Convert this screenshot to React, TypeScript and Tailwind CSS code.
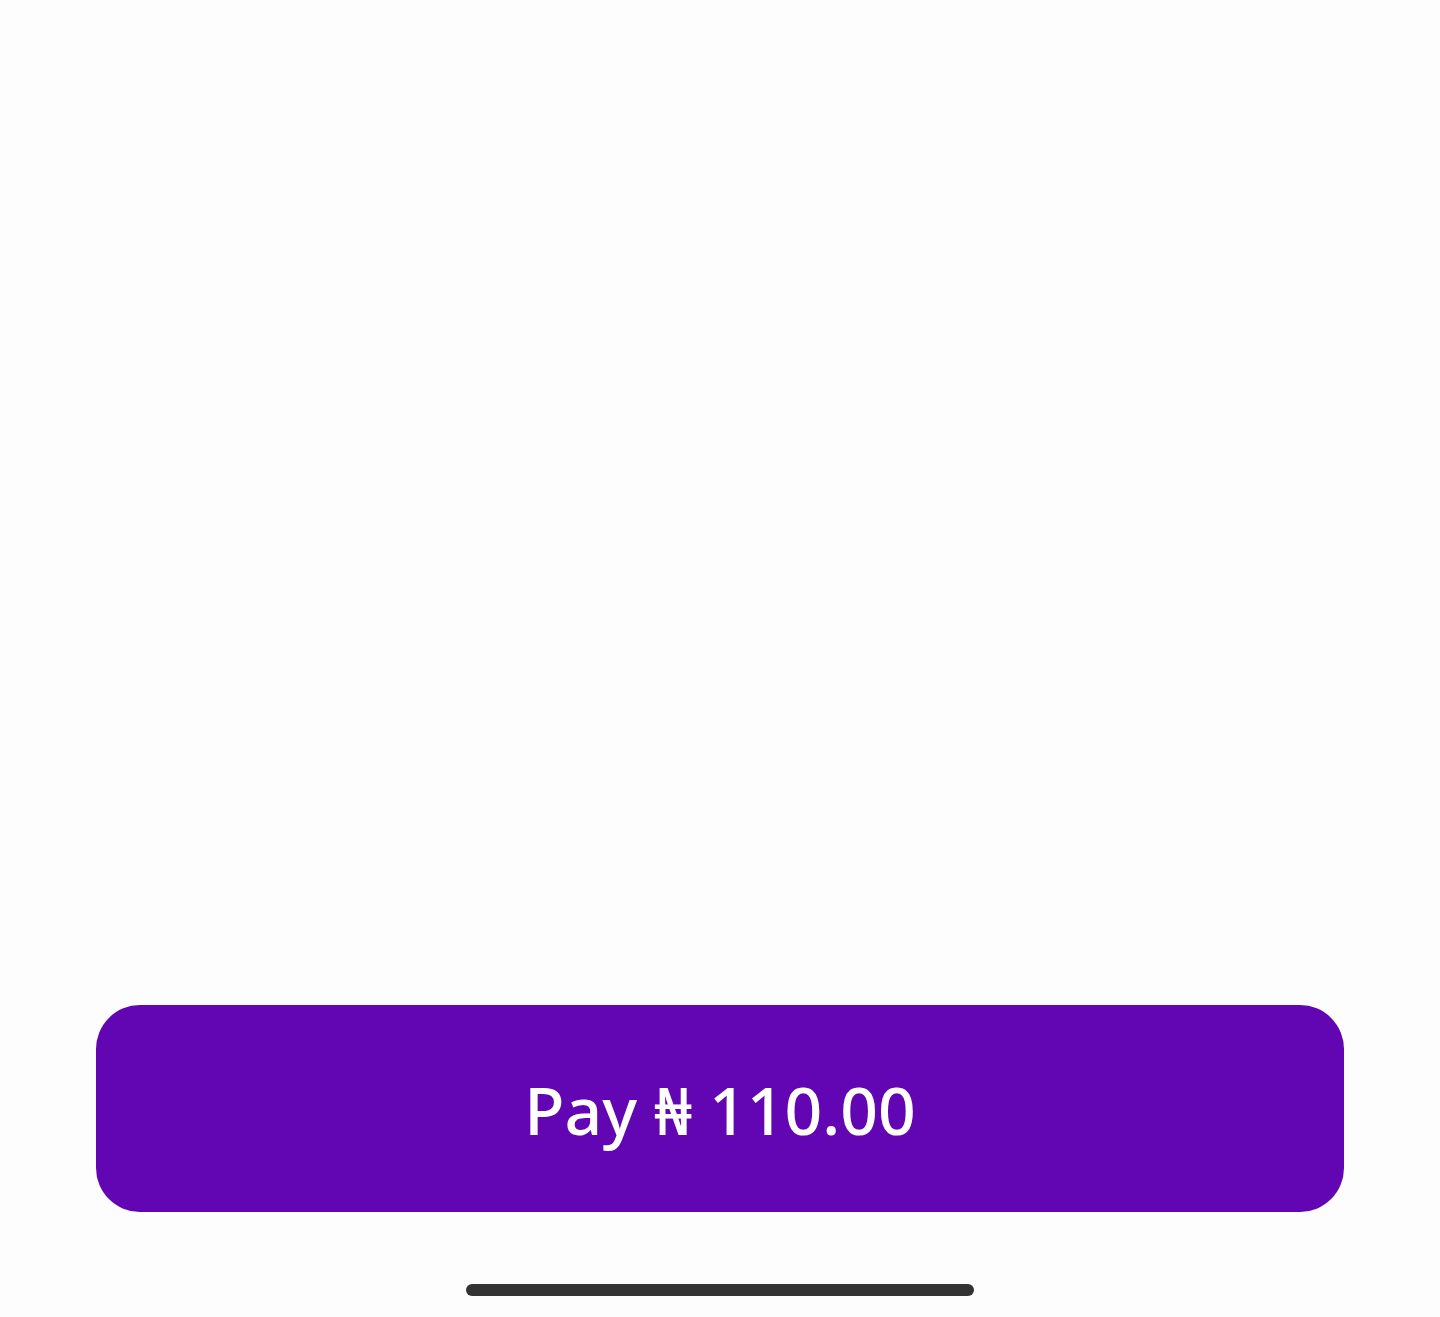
export default function App() {
    return (
        <div className="flex flex-col h-[1317px] w-full bg-[#fdfdfd]" style={{ fontFamily: '"Noto Sans", "DejaVu Sans", sans-serif' }}>
            <div className="flex-1" />
            <div className="px-[96px]">
                <button
                    type="button"
                    className="flex items-center justify-center w-full h-[207px] rounded-[44px] bg-[#6205b2] text-white text-[66px] font-medium leading-none"
                >
                    Pay ₦ 110.00
                </button>
            </div>
            <div className="flex justify-center mt-[72px] mb-[21px]">
                <div className="w-[508px] h-[12px] rounded-full bg-[#333333]" />
            </div>
        </div>
    );
}
